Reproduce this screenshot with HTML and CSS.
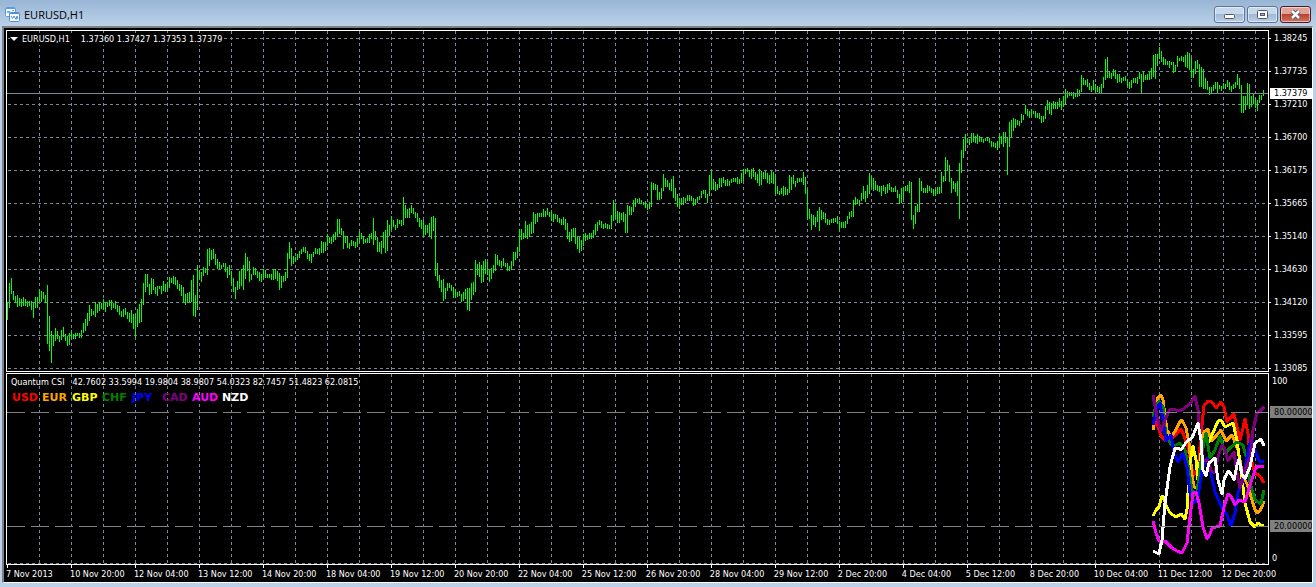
FILE: index.html
```
<!DOCTYPE html>
<html lang="en">
<head>
    <title>EURUSD,H1</title>
    <meta charset="UTF-8">
    <meta name="viewport" content="width=device-width, initial-scale=1.0">
    <link rel="stylesheet" href="styles.css">
</head>
<body>
    <header class="title-bar">
        <svg class="title-icon" width="15" height="15" viewBox="0 0 15 15" aria-hidden="true">
            <rect x="0.5" y="0.5" width="10" height="9" rx="1" fill="#fff" stroke="#5b9be0"/>
            <path d="M1 1.500H10" stroke="#5b9be0"/>
            <path d="M2 6l1-2 1 2 1-2M7 3.500h2" fill="none" stroke="#5b9be0"/>
            <rect x="4.5" y="5.5" width="10" height="9" rx="1" fill="#fff" stroke="#4a8ee0"/>
            <path d="M5 6.500H14" stroke="#4a8ee0"/>
            <path d="M6 9l1.500 2.500 1.500-2.500 2 3.500 1-3.500 1 3" fill="none" stroke="#4a8ee0"/>
        </svg>
        <h1>EURUSD,H1</h1>
        <div class="window-buttons">
            <button type="button" aria-label="Minimize">
                <svg width="13" height="11" viewBox="0 0 13 11"><rect x="1.500" y="5.500" width="10" height="4" rx="1" fill="#fff" stroke="#535666"/></svg>
            </button>
            <button type="button" aria-label="Restore">
                <svg width="13" height="11" viewBox="0 0 13 11"><rect x="1.500" y="1.500" width="10" height="8" rx="1" fill="#fff" stroke="#535666"/><rect x="4.500" y="4.500" width="4" height="2" fill="#9db9d8" stroke="#535666"/></svg>
            </button>
            <button type="button" class="close" aria-label="Close">
                <svg width="13" height="11" viewBox="0 0 13 11"><path d="M3 2l7 7M10 2l-7 7" stroke="#535666" stroke-width="4.500"/><path d="M3 2l7 7M10 2l-7 7" stroke="#fff" stroke-width="2.500"/></svg>
            </button>
        </div>
    </header>

    <main class="chart">
        <section class="pane price-pane">
            <svg class="plot" id="pricePlot" viewBox="7 31 1261 340" preserveAspectRatio="none"></svg>
            <p class="quote"><span class="arrow"></span><span class="name">EURUSD,H1</span>1.37360 1.37427 1.37353 1.37379</p>
        </section>
        <div class="price-axis">
            <span>1.38245</span>
            <span>1.37735</span>
            <span>1.37210</span>
            <span>1.36700</span>
            <span>1.36175</span>
            <span>1.35665</span>
            <span>1.35140</span>
            <span>1.34630</span>
            <span>1.34120</span>
            <span>1.33595</span>
            <span>1.33085</span>
            <strong class="price-tag">1.37379</strong>
        </div>

        <section class="pane csi-pane">
            <svg class="plot" id="csiPlot" viewBox="7 374 1261 190" preserveAspectRatio="none"></svg>
            <div class="csi-info">
                <p class="csi-values"><span>Quantum CSI</span>42.7602 33.5994 19.9804 38.9807 54.0323 82.7457 51.4823 62.0815</p>
                <ul class="currencies">
                    <li class="usd">USD</li>
                    <li class="eur">EUR</li>
                    <li class="gbp">GBP</li>
                    <li class="chf">CHF</li>
                    <li class="jpy">JPY</li>
                    <li class="cad">CAD</li>
                    <li class="aud">AUD</li>
                    <li class="nzd">NZD</li>
                </ul>
            </div>
        </section>
        <div class="csi-axis">
            <span class="top">100</span>
            <span class="level upper">80.00000</span>
            <span class="level lower">20.00000</span>
            <span class="bottom">0</span>
        </div>

        <div class="time-axis">
            <span>7 Nov 2013</span>
            <span>10 Nov 20:00</span>
            <span>12 Nov 04:00</span>
            <span>13 Nov 12:00</span>
            <span>14 Nov 20:00</span>
            <span>18 Nov 04:00</span>
            <span>19 Nov 12:00</span>
            <span>20 Nov 20:00</span>
            <span>22 Nov 04:00</span>
            <span>25 Nov 12:00</span>
            <span>26 Nov 20:00</span>
            <span>28 Nov 04:00</span>
            <span>29 Nov 12:00</span>
            <span>2 Dec 20:00</span>
            <span>4 Dec 04:00</span>
            <span>5 Dec 12:00</span>
            <span>8 Dec 20:00</span>
            <span>10 Dec 04:00</span>
            <span>11 Dec 12:00</span>
            <span>12 Dec 20:00</span>
        </div>
    </main>
    <script src="chart.js"></script>
</body>
</html>
```

FILE: styles.css
```
* {
    box-sizing: border-box;
}
body {
    margin: 0;
    height: 100vh;
    display: flex;
    flex-direction: column;
    padding: 0 3px 4px 2px;
    background: #b9d1ea;
    font-family: "DejaVu Sans Condensed", "Noto Sans", sans-serif;
    font-size: 9px;
    color: #fff;
    overflow: hidden;
}
p, ul, h1 {
    margin: 0;
    padding: 0;
}
.title-bar {
    display: flex;
    align-items: center;
    flex: 0 0 26px;
    margin: 0 -3px 0 -2px;
    padding: 3px 5px 0;
    background: linear-gradient(#98b5d5, #bcd2ea);
}
.title-bar h1 {
    margin-left: 4px;
    font: 11px/16px "Open Sans", "Noto Sans", sans-serif;
    color: #000;
}
.window-buttons {
    display: flex;
    gap: 2px;
    margin-left: auto;
}
.window-buttons button {
    display: flex;
    align-items: center;
    justify-content: center;
    width: 31px;
    height: 17px;
    padding: 0;
    border: 1px solid #5f7591;
    border-radius: 3px;
    background: linear-gradient(#c5d8ec 45%, #9fb9d6 50%, #bbd0e8);
    box-shadow: inset 0 0 0 1px rgba(255,255,255,0.5);
}
.window-buttons .close {
    border-color: #4c1a22;
    background: linear-gradient(#e0a398 45%, #bb4230 50%, #cf7461);
}

.chart {
    flex: 1;
    min-height: 0;
    display: grid;
    grid-template-columns: minmax(0, 1fr) 43px;
    grid-template-rows: minmax(0, 342fr) minmax(0, 193fr) 17px;
    padding: 2px 0 0 2px;
    border: solid;
    border-width: 2px 1px 1px 2px;
    border-color: #808080 #fff #fff #808080;
    background: #000;
}
.pane {
    position: relative;
    min-height: 0;
    border: 1px solid #fff;
}
.csi-pane {
    margin-top: 1px;
}
.plot {
    display: block;
    width: 100%;
    height: 100%;
    fill: none;
    shape-rendering: crispEdges;
}
.grid {
    stroke: #778899;
    stroke-dasharray: 3 3;
}
.bid {
    stroke: #778899;
}
.level-line {
    stroke: #808080;
    stroke-dasharray: 18 6;
}
.bars {
    stroke: #00ff00;
}
.strength {
    stroke-width: 3;
    stroke-linejoin: round;
}

/* text drawn over the plots */
.quote {
    position: absolute;
    top: 2px;
    left: 3px;
    display: flex;
    align-items: center;
    line-height: 12px;
    background: #000;
}
.quote .name {
    margin-right: 11px;
}
.arrow {
    margin-right: 4px;
    border: 4px solid transparent;
    border-top-color: #fff;
    border-bottom: 0;
}
.csi-info {
    position: absolute;
    top: 2px;
    left: 4px;
    line-height: 12px;
}
.csi-values {
    display: flex;
    gap: 8px;
}
.currencies {
    display: grid;
    grid-template-columns: repeat(8, 30px);
    margin: 3px 0 0 1px;
    list-style: none;
    font: bold 11px/14px "DejaVu Sans", sans-serif;
}
.usd { color: #ff0000; stroke: #ff0000; }
.eur { color: #ffa500; stroke: #ffa500; }
.gbp { color: #ffff00; stroke: #ffff00; }
.chf { color: #008000; stroke: #008000; }
.jpy { color: #0000ff; stroke: #0000ff; }
.cad { color: #800080; stroke: #800080; }
.aud { color: #ff00ff; stroke: #ff00ff; }
.nzd { color: #ffffff; stroke: #ffffff; }

.price-axis {
    position: relative;
    display: flex;
    flex-direction: column;
    justify-content: space-between;
    padding-top: 4px;
    line-height: 8px;
}
.price-axis span {
    display: flex;
    align-items: center;
    gap: 3px;
}
.price-axis span::before {
    content: "";
    width: 2px;
    height: 1px;
    background: #fff;
}
.price-tag {
    position: absolute;
    top: 17%;
    left: 1px;
    right: 0;
    padding-left: 4px;
    font-weight: normal;
    line-height: 11px;
    color: #000;
    background: #fff;
}
.csi-axis {
    display: grid;
    grid-template-rows: 12px 19fr 12px 102fr 12px 20fr 12px;
    padding: 3px 0 1px 1px;
    line-height: 12px;
    overflow: hidden;
}
.csi-axis span {
    padding-left: 2px;
    overflow: hidden;
}
.csi-axis .level {
    padding-left: 4px;
    color: #000;
    background: #808080;
}
.upper {
    grid-row: 3;
}
.lower {
    grid-row: 5;
}
.bottom {
    grid-row: 7;
}
.time-axis {
    grid-column: 1 / 3;
    display: flex;
    min-width: 0;
    white-space: nowrap;
    line-height: 12px;
}
.time-axis span {
    flex: 0 0 4.9%;
    min-width: 0;
}
.time-axis span::before {
    content: "";
    display: block;
    width: 1px;
    height: 3px;
    margin-left: 1px;
    background: #fff;
}
```

FILE: chart.js
```
const SVG_NS = 'http://www.w3.org/2000/svg';

// high,low of every hourly bar, in plot units
const bars = `
302,320 283,308 278,294 291,300 296,303 295,307 298,306 299,307 297,306 299,306 301,307 301,306 301,310 303,318 297,308 297,308
289,302 291,302 292,299 295,303 285,344 316,351 331,363 335,346 328,341 331,339 336,342 330,340 327,337 334,341 336,346 333,345
330,339 334,339 333,339 333,336 333,338 330,338 323,333 319,331 313,326 305,321 309,316 311,315 302,317 304,313 302,311 303,309
299,310 303,312 302,307 300,306 300,310 303,308 301,309 305,312 306,315 311,317 309,317 308,315 312,319 313,322 310,323 314,329
314,337 309,327 304,323 299,322 283,305 274,292 274,287 284,295 278,294 279,290 287,294 286,296 286,289 286,294 281,291 284,292
282,291 277,288 278,283 276,284 277,285 280,289 284,291 285,296 287,302 294,305 293,303 292,303 280,302 275,316 295,317 265,310
270,279 272,282 267,276 268,273 249,275 248,266 250,260 249,259 254,265 259,269 262,269 265,269 263,267 263,272 267,278 265,275
271,284 278,292 287,299 281,290 271,289 269,286 265,290 253,279 257,271 261,282 274,280 267,275 268,275 271,278 272,281 274,282
269,279 270,278 274,278 274,278 274,280 269,280 269,279 271,281 273,290 276,288 276,282 272,281 253,278 242,259 248,266 256,264
257,262 254,260 251,258 249,254 247,252 247,253 251,259 254,261 254,263 252,257 248,254 249,254 248,255 241,253 242,253 242,251
234,246 237,243 237,244 234,242 232,240 219,237 219,234 228,235 231,249 236,243 236,248 243,249 240,246 241,246 242,248 238,247
231,243 233,239 236,244 239,243 238,243 234,243 233,239 218,245 231,240 237,252 242,252 241,254 232,248 230,253 220,251 225,236
216,230 220,227 225,230 219,228 220,224 220,226 197,225 205,218 209,218 208,218 205,213 208,214 212,218 213,222 218,227 220,229
220,236 225,235 225,233 223,236 217,239 216,231 218,276 263,281 275,288 280,292 279,301 288,299 283,291 283,288 285,291 287,298
289,298 292,297 291,296 294,302 292,301 289,299 288,310 288,311 283,300 282,295 260,292 264,275 262,277 265,283 261,282 259,274
262,275 270,282 268,279 265,273 254,271 255,265 260,266 261,268 258,266 263,267 263,271 266,271 261,270 252,266 252,260 247,258
229,252 229,240 233,239 221,238 225,239 224,237 222,234 212,233 214,224 213,222 213,217 213,217 209,217 211,217 208,215 212,217
210,221 214,222 214,219 215,222 218,223 219,225 217,225 219,230 223,239 232,242 229,241 228,237 228,244 236,249 237,253 240,251
234,246 233,241 235,240 233,239 233,239 230,238 224,235 222,231 220,225 221,228 224,229 223,228 224,229 225,229 215,229 200,221
204,219 211,223 212,223 213,220 212,222 214,233 205,233 206,215 207,215 200,212 198,207 199,203 198,203 200,204 202,205 201,208
204,210 202,209 182,207 183,190 184,190 185,200 192,200 188,199 174,191 178,187 180,187 183,190 179,191 176,198 188,201 194,207
198,209 198,205 197,205 198,203 195,201 195,201 196,201 198,206 199,205 197,203 196,200 191,198 190,194 190,198 194,203 175,196
170,190 179,190 182,191 184,190 178,188 178,187 177,183 180,186 179,186 181,186 179,183 178,182 178,182 177,184 179,184 173,183
169,181 169,174 168,172 170,177 169,179 168,177 172,180 174,183 169,186 171,185 172,179 171,179 173,183 175,184 171,183 172,184
174,194 186,194 191,195 188,194 186,196 187,195 189,195 175,193 177,190 175,184 181,187 178,183 178,182 178,182 172,185 177,194
189,219 209,219 214,230 215,225 217,227 211,222 207,231 210,220 212,219 213,223 219,225 220,225 219,223 218,223 218,222 216,224
221,231 222,228 222,228 221,228 216,224 212,219 211,217 200,217 197,205 199,204 200,206 193,201 186,199 191,202 185,198 173,194
176,187 178,191 181,190 185,191 186,192 186,196 185,191 187,194 184,193 183,190 187,192 188,192 186,192 190,198 194,204 188,203
187,200 186,191 185,191 181,193 182,220 215,229 206,224 204,212 178,212 181,191 188,193 188,193 185,193 186,191 188,193 189,196
189,196 187,194 187,194 172,193 176,182 157,181 160,171 165,182 178,193 181,189 183,192 181,196 163,219 150,173 139,158 134,151
138,143 139,145 133,143 133,142 136,143 134,144 136,142 137,142 139,143 138,141 137,141 138,143 141,147 142,147 143,148 141,150
134,148 136,144 132,147 132,143 137,175 122,147 120,137 118,131 119,128 120,125 121,126 114,123 115,120 105,114 109,116 111,118
109,117 111,114 111,118 113,118 113,119 116,123 116,122 106,119 100,110 102,114 103,115 101,109 102,109 102,109 98,107 101,110
96,107 89,105 91,98 92,96 92,96 92,99 93,97 89,97 90,96 75,92 78,85 80,85 79,87 83,90 86,92 80,90
84,92 86,92 87,93 84,93 77,88 59,80 57,78 71,78 73,79 69,76 70,79 74,83 74,82 78,83 77,81 76,81
79,86 82,89 80,88 78,83 78,83 77,84 72,79 74,93 71,82 75,80 74,80 72,80 68,79 55,77 54,79 54,66
47,59 51,62 57,65 59,65 61,65 61,68 62,65 62,73 65,72 56,67 58,61 56,61 57,62 55,67 52,68 53,70
58,78 69,78 61,74 60,69 64,87 67,87 69,89 78,89 81,90 87,95 87,94 85,91 82,89 82,93 85,89 86,91
83,89 84,89 80,87 82,90 86,92 84,89 82,88 74,85 78,89 85,113 96,113 96,110 83,105 84,109 96,107 94,104
98,108 100,111 95,103 95,100 90,96
`.trim().split(/\s+/).map(pair => pair.split(',').map(Number));

// currency strength curves, x,y points
const strengths = {
    usd: '1153,428 1156,420 1161,436 1166,441 1170,440 1175,435 1181,429 1184,436 1188,447 1193,475 1198,470 1202,425 1204,406 1208,401 1212,402 1216,408 1221,402 1224,407 1227,422 1230,418 1234,414 1237,427 1240,440 1243,428 1245,419 1248,434 1250,455 1255,473 1260,476 1264,483',
    eur: '1153,430 1156,403 1158,397 1161,395 1163,400 1165,415 1167,430 1171,437 1176,430 1179,423 1182,420 1186,428 1189,443 1192,475 1194,487 1198,487 1201,455 1204,432 1208,429 1211,441 1216,436 1221,430 1226,441 1232,435 1238,450 1243,476 1247,484 1252,500 1255,510 1258,513 1261,509 1264,501',
    gbp: '1153,516 1156,510 1159,507 1162,496 1163,496 1166,505 1170,513 1176,517 1181,514 1185,519 1187,509 1190,463 1193,446 1196,460 1198,480 1201,453 1205,440 1209,442 1215,428 1218,421 1221,420 1225,427 1229,425 1233,423 1237,440 1240,463 1245,503 1250,522 1255,527 1258,523 1261,525 1264,526',
    chf: '1153,417 1156,406 1159,401 1163,407 1166,437 1172,446 1176,445 1180,443 1185,450 1189,470 1193,497 1197,492 1202,453 1206,433 1210,458 1215,450 1220,436 1225,453 1230,448 1237,442 1243,445 1247,460 1250,483 1255,500 1261,504 1264,490',
    jpy: '1153,425 1157,408 1160,403 1163,420 1166,441 1171,435 1174,452 1178,462 1183,453 1187,467 1190,493 1194,503 1198,497 1202,470 1207,458 1211,473 1215,492 1222,508 1227,515 1231,526 1235,513 1238,493 1243,480 1247,457 1251,438 1255,450 1259,461 1264,461',
    cad: '1153,395 1157,417 1161,431 1165,420 1170,409 1176,410 1182,410 1190,404 1195,396 1198,410 1200,433 1203,460 1208,460 1211,471 1215,473 1218,457 1222,445 1225,449 1228,461 1234,452 1237,473 1240,488 1245,470 1250,457 1253,430 1257,413 1260,411 1264,407',
    aud: '1153,521 1156,533 1159,541 1165,541 1172,548 1177,551 1182,553 1187,543 1190,517 1193,493 1196,492 1199,503 1203,527 1207,539 1210,534 1212,528 1220,526 1224,507 1228,494 1231,496 1235,505 1239,500 1245,502 1250,485 1255,470 1258,466 1264,466',
    nzd: '1153,551 1159,554 1162,540 1165,503 1170,467 1175,448 1178,448 1181,450 1187,441 1192,438 1198,423 1201,440 1203,470 1206,476 1209,463 1215,458 1218,480 1222,494 1224,480 1228,471 1231,474 1234,480 1237,465 1239,459 1242,474 1245,479 1250,467 1255,443 1261,439 1264,446'
};

function addPath(svg, className, d) {
    const path = document.createElementNS(SVG_NS, 'path');
    path.setAttribute('class', className);
    path.setAttribute('d', d);
    svg.appendChild(path);
}

function drawVerticalGrid(svg, top, bottom) {
    for (let x = 39; x < 1268; x += 32) {
        addPath(svg, 'grid', `M${x + 0.5} ${top}V${bottom}`);
    }
}

const pricePlot = document.getElementById('pricePlot');
drawVerticalGrid(pricePlot, 31, 371);
for (let y = 38; y < 371; y += 33) {
    addPath(pricePlot, 'grid', `M8 ${y + 0.5}H1268`);
}
addPath(pricePlot, 'bars', bars.map(([high, low], i) => `M${7.5 + i * 2} ${high}V${low}`).join(''));
addPath(pricePlot, 'bid', 'M7 93.5H1268');

const csiPlot = document.getElementById('csiPlot');
drawVerticalGrid(csiPlot, 374, 564);
addPath(csiPlot, 'grid', 'M8 563.5H1268');
Object.keys(strengths).forEach(code => {
    addPath(csiPlot, 'strength ' + code, 'M' + strengths[code].replace(/ /g, 'L'));
});
addPath(csiPlot, 'level-line', 'M7 412.5H1268M7 526.5H1268');
```
